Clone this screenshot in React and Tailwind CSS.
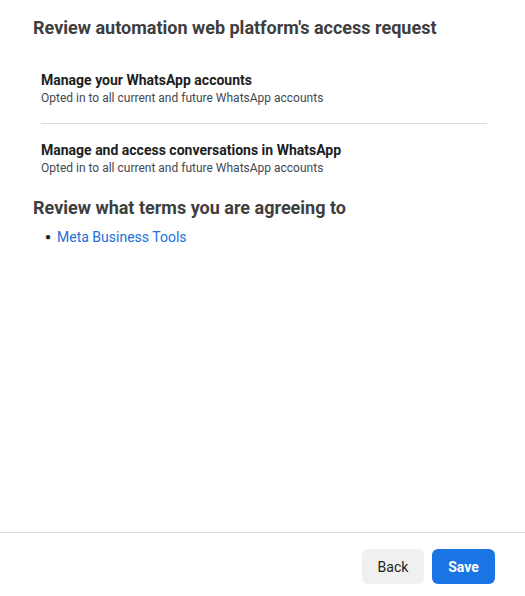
const permissions = [
  {
    title: 'Manage your WhatsApp accounts',
    detail: 'Opted in to all current and future WhatsApp accounts',
  },
  {
    title: 'Manage and access conversations in WhatsApp',
    detail: 'Opted in to all current and future WhatsApp accounts',
  },
];

export default function App() {
  return (
    <div className="flex h-[596px] w-[525px] flex-col bg-white font-['Roboto',sans-serif]">
      <div className="flex-1 px-[33px] pt-[16px]">
        <h2 className="text-[18px] leading-[24px] font-bold text-[#3e3e3e]">
          Review automation web platform's access request
        </h2>

        <div className="mt-[31px] pl-2 pr-[5px]">
          {permissions.map((p, i) => (
            <div
              key={p.title}
              className={i === 0 ? 'pb-[17px] border-b border-[#dadde1]' : 'pt-[17px]'}
            >
              <p className="text-[14px] leading-[19px] font-bold text-[#1c1e21]">{p.title}</p>
              <p className="text-[12px] leading-[16px] text-[#444950]">{p.detail}</p>
            </div>
          ))}
        </div>

        <h2 className="mt-[20px] text-[18px] leading-[24px] font-bold text-[#3e3e3e]">
          Review what terms you are agreeing to
        </h2>
        <ul className="mt-[7px] pl-[12px]">
          <li className="flex items-center text-[14px] leading-[20px]">
            <span className="mr-[6px] text-[#1c1e21] text-[10px]">●</span>
            <a className="text-[#216fdb]" href="#">Meta Business Tools</a>
          </li>
        </ul>
      </div>

      <div className="flex justify-end gap-2 border-t border-[#dadde1] pt-4 pb-3 pr-[30px]">
        <button className="h-[35px] w-[62px] rounded-md bg-[#f0f0f0] pt-px text-[14px] text-[#1c1e21]">
          Back
        </button>
        <button className="h-[35px] w-[63px] rounded-md bg-[#1b74e4] pt-px text-[14px] font-bold text-white">
          Save
        </button>
      </div>
    </div>
  );
}
